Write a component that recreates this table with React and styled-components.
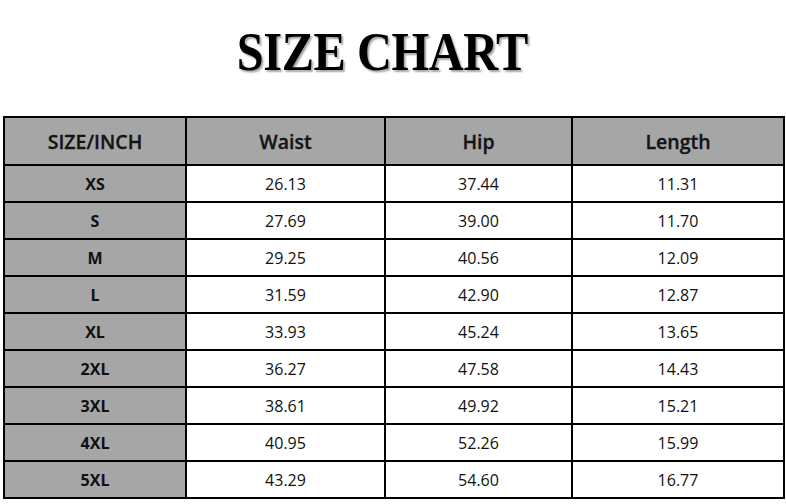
import React from 'react';
import styled, { createGlobalStyle } from 'styled-components';

const GlobalStyle = createGlobalStyle`
  html, body {
    margin: 0;
    padding: 0;
    background: #ffffff;
  }
`;

const Page = styled.div`
  width: 786px;
  height: 504px;
  background: #fff;
  overflow: hidden;
`;

const TitleBar = styled.div`
  height: 116px;
  display: flex;
  justify-content: center;
  padding-right: 22px;
  box-sizing: border-box;
`;

const Title = styled.h1`
  margin: 24px 0 0;
  font-family: 'Liberation Serif', 'Times New Roman', serif;
  font-weight: 700;
  font-size: 55px;
  line-height: 1;
  color: #000;
  letter-spacing: -0.5px;
  transform: scaleX(0.88);
  text-shadow: 2px 2px 2px rgba(0, 0, 0, 0.35);
`;

const Table = styled.table`
  margin-left: 3px;
  width: 780px;
  border-collapse: collapse;
  border: 2px solid #000;
  font-family: 'Open Sans', 'Liberation Sans', sans-serif;
  color: #111;
  table-layout: fixed;
`;

const Head = styled.th`
  height: 46px;
  padding: 0;
  border: 2px solid #000;
  background: #a6a6a6;
  font-size: 19.5px;
  font-weight: 600;
  text-align: center;
  color: #141414;
  -webkit-text-stroke: 0.3px #141414;
`;

const SizeCell = styled.td`
  height: 35px;
  padding: 0;
  border: 2px solid #000;
  background: #a6a6a6;
  font-size: 16px;
  font-weight: 700;
  text-align: center;
`;

const Cell = styled.td`
  height: 35px;
  padding: 0;
  border: 2px solid #000;
  background: #fff;
  font-size: 16px;
  text-align: center;
`;

const rows = [
  ['XS', '26.13', '37.44', '11.31'],
  ['S', '27.69', '39.00', '11.70'],
  ['M', '29.25', '40.56', '12.09'],
  ['L', '31.59', '42.90', '12.87'],
  ['XL', '33.93', '45.24', '13.65'],
  ['2XL', '36.27', '47.58', '14.43'],
  ['3XL', '38.61', '49.92', '15.21'],
  ['4XL', '40.95', '52.26', '15.99'],
  ['5XL', '43.29', '54.60', '16.77'],
];

const App = () => {
  return (
    <Page>
      <GlobalStyle />
      <TitleBar>
        <Title>SIZE CHART</Title>
      </TitleBar>
      <Table>
        <colgroup>
          <col style={{ width: 182 }} />
          <col style={{ width: 199 }} />
          <col style={{ width: 187 }} />
          <col style={{ width: 212 }} />
        </colgroup>
        <thead>
          <tr>
            <Head>SIZE/INCH</Head>
            <Head>Waist</Head>
            <Head>Hip</Head>
            <Head>Length</Head>
          </tr>
        </thead>
        <tbody>
          {rows.map((r) => (
            <tr key={r[0]}>
              <SizeCell>{r[0]}</SizeCell>
              <Cell>{r[1]}</Cell>
              <Cell>{r[2]}</Cell>
              <Cell>{r[3]}</Cell>
            </tr>
          ))}
        </tbody>
      </Table>
    </Page>
  );
};

export default App;
